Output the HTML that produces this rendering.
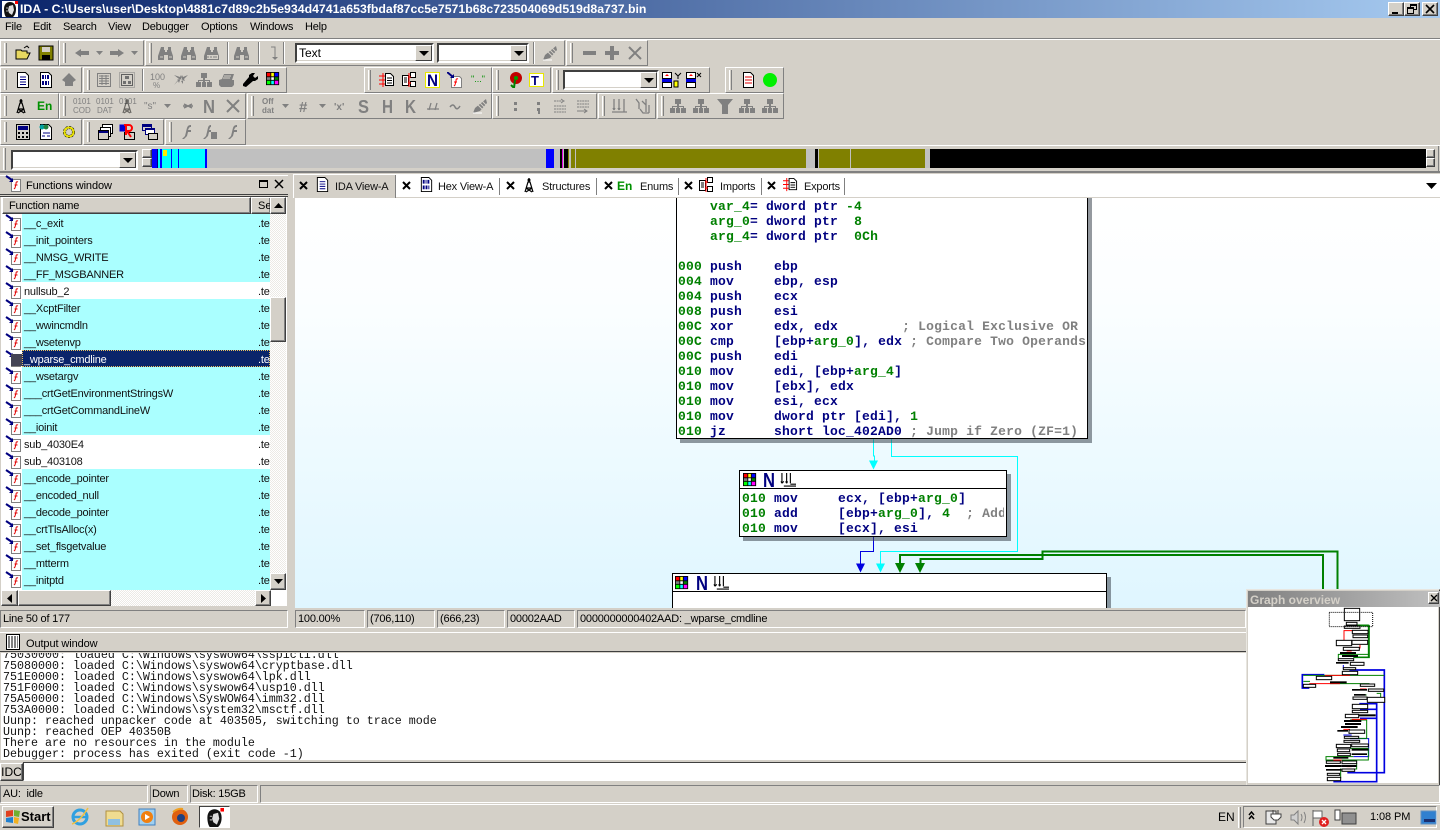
<!DOCTYPE html>
<html><head><meta charset="utf-8"><title>IDA</title>
<style>
html,body{margin:0;padding:0;background:#d4d0c8}
#r{position:relative;width:1440px;height:830px;overflow:hidden;background:#d4d0c8;font:12px "Liberation Sans",sans-serif;color:#000}
#r div,#r span.a,#r svg.a{position:absolute;box-sizing:border-box}
.t{white-space:pre;line-height:16px;font-size:11px;letter-spacing:-.2px}
.g{height:26px;border:1px solid;border-color:#fff #808080 #808080 #fff;background:#d4d0c8}
.g:before{content:"";position:absolute;left:3px;top:2px;bottom:2px;width:3px;border-left:1px solid #fff;border-right:1px solid #808080;background:#d4d0c8;box-sizing:border-box}
.sep{width:2px;height:22px;border-left:1px solid #808080;border-right:1px solid #fff}
.combo{height:20px;background:#fff;border:2px solid;border-color:#404040 #fff #fff #404040;box-shadow:inset -1px -1px 0 #d4d0c8}
.cb{width:17px;height:16px;top:0;right:0;background:#d4d0c8;border:1px solid;border-color:#fff #404040 #404040 #fff}
.cb:after{content:"";position:absolute;left:3px;top:5px;border:5px solid transparent;border-top:5px solid #000;border-bottom:0}
.btn{background:#d4d0c8;border:1px solid;border-color:#fff #404040 #404040 #fff;box-shadow:inset -1px -1px 0 #808080}
.ck{background-color:#eceae5;background-image:linear-gradient(45deg,#fff 25%,transparent 25%,transparent 75%,#fff 75%),linear-gradient(45deg,#fff 25%,transparent 25%,transparent 75%,#fff 75%);background-size:2px 2px;background-position:0 0,1px 1px}
.row{left:22px;width:248px;height:17px;background:#aaffff;padding-left:2px;line-height:21px;font-size:11px;letter-spacing:-.2px;white-space:pre;color:#111}
.row.w{background:#fff}
.row.s{background:#0a246a;color:#fff;outline:1px dotted #e8c060;outline-offset:-1px}
.te{position:absolute;left:236px;top:0}
.sc{height:18px;top:610px;border:1px solid;border-color:#808080 #fff #fff #808080;line-height:16px;padding-left:2px;white-space:pre;font-size:11px;letter-spacing:-.2px}
.st{height:18px;top:785px;border:1px solid;border-color:#808080 #fff #fff #808080;line-height:16px;padding-left:2px;white-space:pre;font-size:11px;letter-spacing:-.2px}
.tab{top:179px;line-height:16px;font-size:11px;letter-spacing:-.2px;white-space:pre;color:#111}
.tsep{top:178px;width:1px;height:17px;background:#808080}
.blk{background:#fff;border:1px solid #000;box-shadow:4px 4px 0 rgba(60,70,80,.55)}
.code{font:bold 13px/15px "Liberation Mono",monospace;letter-spacing:.2px;white-space:pre;color:#000080}
.code i{font-style:normal;color:#008000}
.code b{font-weight:bold;color:#808080}
.out{font:11.67px/11px "Liberation Mono",monospace;white-space:pre;color:#111}
text{font-family:"Liberation Sans",sans-serif}
</style></head><body><div id="r">

<svg width="0" height="0" style="position:absolute"><defs>
<symbol id="open" viewBox="0 0 16 16"><path d="M1 5h5l1 1h5v2h3l-3 6H1z" fill="#e8d860" stroke="#000"/><path d="M9 3l3-2 2 2" fill="none" stroke="#000"/></symbol>
<symbol id="save" viewBox="0 0 16 16"><rect x="1" y="1" width="14" height="14" fill="#808000" stroke="#000"/><rect x="4" y="2" width="8" height="5" fill="#d4d0c8"/><rect x="4" y="10" width="8" height="5" fill="#000"/></symbol>
<symbol id="la" viewBox="0 0 16 16"><path d="M1 8l6-4v2h8v4H7v2z" fill="#808080"/></symbol>
<symbol id="ra" viewBox="0 0 16 16"><path d="M15 8L9 4v2H1v4h8v2z" fill="#808080"/></symbol>
<symbol id="dd" viewBox="0 0 16 16"><path d="M4 6h7l-3.500 4z" fill="#808080"/></symbol>
<symbol id="bino" viewBox="0 0 16 16"><path d="M3 2h3v3h1v2h2V5h1V2h3v3l2 6v4H10v-5H6v5H0v-4l2-6z" fill="#808080"/><path d="M2 12h3M11 12h3" stroke="#d4d0c8"/></symbol>
<symbol id="bino2" viewBox="0 0 16 16"><path d="M3 2h3v3h1v2h2V5h1V2h3v3l2 6v4H0v-4l2-6z" fill="#808080"/><rect x="3" y="10" width="11" height="4" fill="#d4d0c8"/><path d="M4 11v2M7 11v2M10 11v2M12 11v2" stroke="#808080"/></symbol>
<symbol id="dn" viewBox="0 0 16 16"><path d="M5 2h4v10" fill="none" stroke="#808080"/><path d="M6 12h6l-3 3z" fill="#808080"/></symbol>
<symbol id="pen" viewBox="0 0 16 16"><path d="M14 1l1 4-7 8-7 2 2-5z" fill="#808080"/><path d="M6 7l5 5M8 5l5 5M10 3l4 4" stroke="#d4d0c8"/><path d="M1 15h9" stroke="#fff"/></symbol>
<symbol id="minus" viewBox="0 0 16 16"><rect x="1" y="6" width="13" height="4" fill="#808080"/></symbol>
<symbol id="plus" viewBox="0 0 16 16"><path d="M6 1h4v5h5v4h-5v5H6v-5H1V6h5z" fill="#808080"/></symbol>
<symbol id="xx" viewBox="0 0 16 16"><path d="M2 2l12 12M14 2L2 14" stroke="#808080" stroke-width="2"/></symbol>
<symbol id="doc" viewBox="0 0 16 16"><path d="M2.500.5h8l3 3v12h-11z" fill="#fff" stroke="#000"/><path d="M5 5h6M5 7.500h6M5 10h6M5 12.500h6" stroke="#000080"/></symbol>
<symbol id="hex" viewBox="0 0 16 16"><path d="M2.500.5h8l3 3v12h-11z" fill="#fff" stroke="#000"/><path d="M4 3h2v4H4zM7 3h1v4H7zM9 3h2v4H9zM4 9h2v4H4zM7 9h2v4H7zM10 9h1v4h-1z" fill="#000080"/></symbol>
<symbol id="house" viewBox="0 0 16 16"><path d="M8 1l7 7-3 2v4H4v-4L1 8z" fill="#808080"/></symbol>
<symbol id="form" viewBox="0 0 16 16"><rect x="1.500" y="1.500" width="13" height="13" fill="#d4d0c8" stroke="#808080"/><path d="M3 4h10M3 6.500h10M3 9h10M3 11.500h10M6 3v10M10 3v10" stroke="#808080"/></symbol>
<symbol id="prox" viewBox="0 0 16 16"><rect x=".5" y=".5" width="15" height="15" fill="none" stroke="#808080" stroke-dasharray="1 1"/><rect x="2.500" y="2.500" width="11" height="11" fill="#d4d0c8" stroke="#606060"/><path d="M6 4h4v3H6zM4 9h3v3H4zM9 9h3v3H9z" fill="#707070"/></symbol>
<symbol id="shr" viewBox="0 0 16 16"><path d="M1 3l5 4-1 1 4-1-1-4-1 2zM15 3l-4 4 1 2-4-2 1-4 1 2zM1 13l4-4 1 2 1-3-3-1 1 1zM15 13l-5-4v3l-2-3 3-1-1 1z" fill="#808080"/></symbol>
<symbol id="tree" viewBox="0 0 16 16"><path d="M5 1h6v5H9v2h5v2h2v5h-5v-5h2V9H9v1h1v5H6v-5h1V9H3v1h2v5H0v-5h2V8h5V6H5z" fill="#808080"/></symbol>
<symbol id="prn" viewBox="0 0 16 16"><path d="M5 2h10l-2 6h2v5l-2 2H2l-2-2V8l3-1z" fill="#808080"/><path d="M5 4h7M4 6h7" stroke="#d4d0c8"/></symbol>
<symbol id="wr" viewBox="0 0 16 16"><path d="M10 1l3 0-2 3 2 2 3-2 0 3-3 2h-2l-7 6-3-1 0-2 6-7V3z" fill="#000"/></symbol>
<symbol id="grid" viewBox="0 0 16 16"><rect width="15" height="15" fill="#000"/><rect x="1" y="1" width="4" height="4" fill="#f00"/><rect x="6" y="1" width="3" height="4" fill="#ff0"/><rect x="10" y="1" width="4" height="4" fill="#00f"/><rect x="1" y="6" width="4" height="3" fill="#808080"/><rect x="6" y="6" width="3" height="3" fill="#fff"/><rect x="10" y="6" width="4" height="3" fill="#008000"/><rect x="1" y="10" width="4" height="4" fill="#0f0"/><rect x="6" y="10" width="3" height="4" fill="#0ff"/><rect x="10" y="10" width="4" height="4" fill="#f0f"/></symbol>
<symbol id="exp" viewBox="0 0 16 16"><path d="M6.500 1.500h5l3 3v9h-8z" fill="#fff" stroke="#000"/><path d="M8 6h5M8 8.500h5M8 11h5" stroke="#000"/><path d="M4 1v14M0 4h6M0 8h6M0 12h6" stroke="#f00"/></symbol>
<symbol id="imp" viewBox="0 0 16 16"><path d="M1.500 3.500h6v10h-6z" fill="#fff" stroke="#000"/><path d="M9.500.5h5v5h-5zM9.500 9.500h5v5h-5z" fill="#fff" stroke="#000"/><path d="M7 5h3M7 11h3M8 1v14" stroke="#f00"/><path d="M3 6h3M3 8h3M3 10h3" stroke="#000"/></symbol>
<symbol id="fx" viewBox="0 0 16 16"><path d="M4.500 4.500h8l2 2v9h-10z" fill="#fff" stroke="#808080"/><path d="M11 7c-2-1-2 1-2 2l-1 4-1 1M7 10h3" fill="none" stroke="#f00"/><path d="M0 0l6 5" stroke="#000080" stroke-width="2"/><path d="M7 6V2L3 6z" fill="#000080"/></symbol>
<symbol id="fn" viewBox="0 0 18 17"><path d="M8.500 4.500h7v12h-9v-10z" fill="#fff" stroke="#808080"/><path d="M13 7c-2-1-2 1-2 2l-1 4-1 1M9.500 10h3" fill="none" stroke="#e00000"/><path d="M1 1l6 4" stroke="#000080" stroke-width="2"/><path d="M8 7V3L4 7z" fill="#000080"/></symbol>
<symbol id="strc" viewBox="0 0 16 16"><path d="M8 1v4M4 15L7 5h2l3 10M5 11l6 0M5 11l6 4M11 11l-6 4" fill="none" stroke="#000" stroke-width="1.200"/><circle cx="8" cy="3" r="1.500" fill="#000"/></symbol>
<symbol id="rose" viewBox="0 0 16 16"><circle cx="10" cy="6" r="6" fill="#c00000"/><circle cx="10" cy="6" r="2" fill="#00a000"/><path d="M5 13l3 3 1-8" fill="none" stroke="#008000" stroke-width="2"/></symbol>
<symbol id="db1" viewBox="0 0 18 16"><rect x=".5" y=".5" width="9" height="6" fill="#fff" stroke="#000"/><path d="M3 4l2-2 2 2z" fill="#f00"/><rect x="0" y="7" width="10" height="3" fill="#0000e0"/><rect x=".5" y="10.500" width="9" height="5" fill="#fff" stroke="#000"/></symbol>
<symbol id="calc" viewBox="0 0 16 16"><rect x="1.500" y=".5" width="13" height="15" fill="#d4d0c8" stroke="#000"/><rect x="3" y="2" width="10" height="4" fill="#000080"/><path d="M3 8h2v2H3zM7 8h2v2H7zM11 8h2v2h-2zM3 12h2v2H3zM7 12h2v2H7zM11 12h2v2h-2z" fill="#000"/></symbol>
<symbol id="note" viewBox="0 0 16 16"><path d="M2.500.5h8l3 3v12h-11z" fill="#fff" stroke="#000"/><circle cx="4" cy="3" r="2.500" fill="#00a0a0"/><circle cx="8" cy="3" r="2.500" fill="#208040"/><path d="M5 9h7M4 12h3M9 12h3" stroke="#000080"/></symbol>
<symbol id="gear" viewBox="0 0 16 16"><circle cx="8" cy="8" r="4.500" fill="none" stroke="#000" stroke-width="3" stroke-dasharray="2 1"/><circle cx="8" cy="8" r="4.500" fill="none" stroke="#e8e000" stroke-width="2"/></symbol>
<symbol id="win" viewBox="0 0 16 16"><path d="M5.500.5h10v9h-10z" fill="#fff" stroke="#000"/><path d="M3.500 3.500h10v9h-10z" fill="#fff" stroke="#000"/><path d="M1.500 6.500h10v9h-10z" fill="#d4d0c8" stroke="#000"/><path d="M2 7h9v2H2z" fill="#000080"/></symbol>
<symbol id="winr" viewBox="0 0 16 16"><path d="M.5.5h7v7h-7z" fill="#0000d0"/><path d="M5.500 8.500h10v7h-10z" fill="#d4d0c8" stroke="#000"/><path d="M5 1h5a2 2 0 010 6H8l4 6M7 1v10" fill="none" stroke="#f00" stroke-width="2"/></symbol>
<symbol id="winb" viewBox="0 0 16 16"><path d="M.5.5h9v6h-9z" fill="#d4d0c8" stroke="#000080"/><path d="M3.500 4.500h9v6h-9z" fill="#fff" stroke="#000080"/><path d="M6.500 9.500h9v6h-9z" fill="#d4d0c8" stroke="#000"/><path d="M1 1h8v2H1zM4 5h8v1H4z" fill="#000080"/></symbol>
<symbol id="fg" viewBox="0 0 16 16"><path d="M12 1C8 1 8 4 7 8l-1 4-3 3h2l3-3 1-4h3V6H9c1-2 1-3 3-3z" fill="#808080"/></symbol>
<symbol id="fg2" viewBox="0 0 16 16"><path d="M9 1C6 1 6 4 5 8l-1 4-3 3h2l3-3 1-4h2V6H7c1-2 1-3 2-3z" fill="#808080"/><rect x="9" y="8" width="6" height="7" fill="#808080"/></symbol>
<symbol id="lay" viewBox="0 0 16 16"><path d="M2 1v11M2 12l-1-2M2 12l1-2M7 1v11M7 12l-1-2M7 12l1-2M12 1v13M0 14h15" stroke="#808080" fill="none" stroke-width="1.300"/></symbol>
<symbol id="lay2" viewBox="0 0 16 16"><path d="M1 1l3 4 0 6M7 3l4 4v7M11 1v7M14 7v8M5 11l3 4h6" stroke="#808080" fill="none" stroke-width="1.300"/></symbol>
<symbol id="ltree" viewBox="0 0 16 16"><path d="M1 1v11M1 12l-1-2M1 12l2-2M6 1v11M6 12l-1-2M6 12l1-2M10 1v11M3 15h13M10 13h6" stroke="#000" fill="none" stroke-width="1.200"/></symbol>
<symbol id="girl" viewBox="0 0 16 16"><rect width="16" height="16" fill="#fff"/><path d="M2 8C2 3 5 1 8 1s6 2 6 7-2 7-3 8H4C3 15 2 12 2 8z" fill="#111"/><path d="M7 5l4-1 1 5-2 5-3-2-1-3z" fill="#ddd"/><path d="M4 7h2M4 10h2" stroke="#aaa"/><rect x="13" y="0" width="3" height="3" fill="#f00"/></symbol>
<symbol id="arrowc" viewBox="0 0 10 10"><path d="M0 0h10L5 10z"/></symbol>
</defs></svg>

<!-- title bar -->
<div style="left:0;top:0;width:1440px;height:18px;background:linear-gradient(90deg,#0a246a,#a6caf0)"></div>
<svg class="a" style="left:2px;top:1px" width="16" height="16"><use href="#girl"/></svg>
<div style="left:20px;top:1px;color:#fff;font:bold 12.3px/16px 'Liberation Sans',sans-serif;white-space:pre">IDA - C:\Users\user\Desktop\4881c7d89c2b5e934d4741a653fbdaf87cc5e7571b68c723504069d519d8a737.bin</div>
<div class="btn" style="left:1388px;top:2px;width:16px;height:14px"><div style="left:3px;top:9px;width:6px;height:2px;background:#000"></div></div>
<div class="btn" style="left:1404px;top:2px;width:16px;height:14px"><div style="left:5px;top:1px;width:7px;height:6px;border:1px solid #000;border-top-width:2px"></div><div style="left:2px;top:4px;width:7px;height:7px;border:1px solid #000;border-top-width:2px;background:#d4d0c8"></div></div>
<div class="btn" style="left:1422px;top:2px;width:16px;height:14px"><svg class="a" style="left:2px;top:1px" width="10" height="10"><path d="M1 1l8 8M9 1L1 9" stroke="#000" stroke-width="1.600"/></svg></div>

<!-- menu -->
<div class="t" style="left:5px;top:19px">File</div>
<div class="t" style="left:33px;top:19px">Edit</div>
<div class="t" style="left:63px;top:19px">Search</div>
<div class="t" style="left:108px;top:19px">View</div>
<div class="t" style="left:142px;top:19px">Debugger</div>
<div class="t" style="left:201px;top:19px">Options</div>
<div class="t" style="left:250px;top:19px">Windows</div>
<div class="t" style="left:305px;top:19px">Help</div>
<div style="left:0;top:38px;width:1440px;height:1px;background:#808080"></div>
<div style="left:0;top:39px;width:1440px;height:1px;background:#fff"></div>

<!-- toolbars -->
<div class="g" style="left:0;top:40px;width:59px"></div>
<div class="g" style="left:59px;top:40px;width:85px"></div>
<div class="g" style="left:145px;top:40px;width:420px"></div>
<div class="g" style="left:566px;top:40px;width:82px"></div>
<div class="sep" style="left:227px;top:42px"></div><div class="sep" style="left:258px;top:42px"></div><div class="sep" style="left:283px;top:42px"></div><div class="sep" style="left:533px;top:42px"></div>
<div class="combo" style="left:295px;top:43px;width:139px"><span class="a" style="left:2px;top:0;line-height:16px">Text</span><div class="cb"></div></div>
<div class="combo" style="left:437px;top:43px;width:92px"><div class="cb"></div></div>

<div class="g" style="left:0;top:67px;width:82px"></div>
<div class="g" style="left:83px;top:67px;width:204px"></div>
<div class="sep" style="left:142px;top:69px"></div>
<div class="g" style="left:364px;top:67px;width:128px"></div>
<div class="g" style="left:492px;top:67px;width:59px"></div>
<div class="g" style="left:552px;top:67px;width:158px"></div>
<div class="g" style="left:725px;top:67px;width:59px"></div>
<div class="combo" style="left:563px;top:70px;width:96px"><div class="cb"></div></div>

<div class="g" style="left:0;top:93px;width:59px"></div>
<div class="g" style="left:59px;top:93px;width:187px"></div>
<div class="g" style="left:247px;top:93px;width:245px"></div>
<div class="g" style="left:492px;top:93px;width:105px"></div>
<div class="g" style="left:598px;top:93px;width:58px"></div>
<div class="g" style="left:657px;top:93px;width:127px"></div>

<div class="g" style="left:0;top:119px;width:82px"></div>
<div class="g" style="left:83px;top:119px;width:81px"></div>
<div class="g" style="left:165px;top:119px;width:81px"></div>

<svg class="a" style="left:0;top:0" width="1440" height="175">
<use href="#open" x="15" y="45" width="16" height="16"/><use href="#save" x="38" y="45" width="16" height="16"/>
<use href="#la" x="74" y="45" width="16" height="16"/><use href="#dd" x="92" y="45" width="16" height="16"/><use href="#ra" x="109" y="45" width="16" height="16"/><use href="#dd" x="127" y="45" width="16" height="16"/>
<use href="#bino" x="158" y="45" width="16" height="16"/><use href="#bino" x="181" y="45" width="16" height="16"/><use href="#bino2" x="204" y="45" width="16" height="16"/><use href="#bino" x="234" y="45" width="16" height="16"/><use href="#dn" x="266" y="45" width="16" height="16"/>
<use href="#pen" x="542" y="45" width="16" height="16"/><use href="#minus" x="582" y="45" width="16" height="16"/><use href="#plus" x="604" y="45" width="16" height="16"/><use href="#xx" x="627" y="45" width="16" height="16"/>

<use href="#doc" x="15" y="72" width="16" height="16"/><use href="#hex" x="38" y="72" width="16" height="16"/><use href="#house" x="61" y="72" width="16" height="16"/>
<use href="#form" x="96" y="72" width="16" height="16"/><use href="#prox" x="119" y="72" width="16" height="16"/>
<text x="150" y="80" font-size="9" fill="#808080">100</text><text x="153" y="88" font-size="8" fill="#808080">%</text>
<use href="#shr" x="173" y="72" width="16" height="16"/><use href="#tree" x="196" y="72" width="16" height="16"/><use href="#prn" x="219" y="72" width="16" height="16"/><use href="#wr" x="242" y="72" width="16" height="16"/><use href="#grid" x="266" y="72" width="14" height="14"/>
<use href="#exp" x="379" y="72" width="16" height="16"/><use href="#imp" x="401" y="72" width="16" height="16"/>
<rect x="425.500" y="72.500" width="14" height="15" fill="#fff" stroke="#e8e800"/><text x="427" y="86" font-size="17" font-weight="bold" fill="#000080" textLength="11" lengthAdjust="spacingAndGlyphs">N</text>
<use href="#fx" x="447" y="72" width="16" height="16"/>
<text x="471" y="82" font-size="9" fill="#009000">"..."</text>
<use href="#rose" x="506" y="72" width="16" height="16"/>
<rect x="529.500" y="73.500" width="14" height="13" fill="#fff" stroke="#e8e800"/><text x="531" y="85" font-size="13" font-weight="bold" font-family="Liberation Serif" fill="#000080">T</text>
<use href="#db1" x="662" y="72" width="18" height="16"/><path d="M675 73l3 3 3-3M678 76v3" stroke="#000" fill="none"/><rect x="674" y="81" width="4" height="6" fill="#ff0" stroke="#000"/>
<use href="#db1" x="686" y="72" width="18" height="16"/><path d="M697 73l4 4M701 73l-4 4" stroke="#000"/>
<path d="M743.500 72.500h7l3 3v12h-10z" fill="#fff" stroke="#000"/><path d="M745 77h7M745 80h7M745 83h7" stroke="#e00000"/>
<circle cx="770" cy="80" r="7" fill="#00f000"/>

<use href="#strc" x="13" y="98" width="16" height="16"/><text x="37" y="110" font-size="12" font-weight="bold" font-family="Liberation Serif" fill="#009000">En</text>
<g fill="#808080" font-size="8"><text x="73" y="104">0101</text><text x="73" y="113">COD</text><text x="96" y="104">0101</text><text x="97" y="113">DAT</text><text x="119" y="104">0101</text></g>
<use href="#strc" x="119" y="98" width="16" height="16" opacity=".5"/>
<text x="144" y="109" font-size="10" fill="#808080">"s"</text><use href="#dd" x="160" y="98" width="16" height="16"/><path d="M184 104l8 4M192 104l-8 4M183 106h10" stroke="#808080" stroke-width="1.500"/>
<text x="203" y="113" font-size="18" font-weight="bold" fill="#808080" textLength="12" lengthAdjust="spacingAndGlyphs">N</text><use href="#xx" x="225" y="98" width="16" height="16"/>
<g fill="#808080" font-weight="bold" font-size="8"><text x="262" y="104">Off</text><text x="262" y="113">dat</text></g><use href="#dd" x="278" y="98" width="16" height="16"/>
<text x="299" y="112" font-size="15" font-weight="bold" fill="#808080">#</text><use href="#dd" x="315" y="98" width="16" height="16"/>
<text x="334" y="110" font-size="10" font-weight="bold" fill="#808080">'x'</text>
<g font-size="18" font-weight="bold" fill="#808080"><text x="358" y="113" textLength="11" lengthAdjust="spacingAndGlyphs">S</text><text x="382" y="113" textLength="11" lengthAdjust="spacingAndGlyphs">H</text><text x="405" y="113" textLength="11" lengthAdjust="spacingAndGlyphs">K</text></g>
<path d="M427 109h12M431 103l-2 7M437 103l-2 7" stroke="#808080" stroke-width="1.300"/><path d="M450 107q3-4 5 0t5-1" fill="none" stroke="#808080" stroke-width="1.500"/>
<use href="#pen" x="472" y="98" width="16" height="16"/>
<g fill="#808080"><rect x="514" y="102" width="3" height="3"/><rect x="514" y="108" width="3" height="3"/><rect x="537" y="102" width="3" height="3"/><rect x="537" y="108" width="3" height="3"/><rect x="538" y="111" width="2" height="3"/></g>
<g fill="none" stroke="#808080"><path d="M554 101h10M561 99l3 2-3 2M554 106h12M554 109h12M554 112h12" stroke-dasharray="2 .6"/><path d="M577 101h12M577 104h12M577 107h12" stroke-dasharray="2 .6"/><path d="M577 111h10M584 109l3 2-3 2"/></g>
<use href="#lay" x="612" y="98" width="16" height="16"/><use href="#lay2" x="635" y="98" width="16" height="16"/>
<use href="#tree" x="670" y="98" width="16" height="16"/><use href="#tree" x="693" y="98" width="16" height="16"/><path d="M717 99h16l-5 6v9h-6v-9z" fill="#808080"/><use href="#tree" x="739" y="98" width="16" height="16"/><use href="#tree" x="762" y="98" width="16" height="16"/>

<use href="#calc" x="15" y="124" width="16" height="16"/><use href="#note" x="38" y="124" width="16" height="16"/><use href="#gear" x="61" y="124" width="16" height="16"/>
<use href="#win" x="97" y="124" width="16" height="16"/><use href="#winr" x="119" y="124" width="16" height="16"/><use href="#winb" x="142" y="124" width="16" height="16"/>
<use href="#fg" x="179" y="124" width="16" height="16"/><use href="#fg2" x="202" y="124" width="16" height="16"/><use href="#fg" x="225" y="124" width="16" height="16"/>
</svg>

<!-- nav band row -->
<div style="left:0;top:145px;width:1440px;height:1px;background:#fff"></div>
<div style="left:1438px;top:146px;width:1px;height:26px;background:#808080"></div>
<div style="left:0;top:171px;width:1440px;height:2px;background:#808080"></div>
<div style="left:3px;top:148px;width:3px;height:22px;border-left:1px solid #fff;border-right:1px solid #808080"></div>
<div class="combo" style="left:11px;top:150px;width:127px"><div class="cb"></div></div>
<div class="btn" style="left:142px;top:149px;width:10px;height:9px"></div>
<div class="btn" style="left:142px;top:158px;width:10px;height:9px"></div>
<div style="left:152px;top:149px;width:1274px;height:19px;background:#c0c0c0"></div>
<div style="left:152px;top:149px;width:5px;height:19px;background:#0000ff"></div>
<div style="left:157px;top:149px;width:1px;height:19px;background:#000080"></div>
<div style="left:158px;top:149px;width:2px;height:19px;background:#0ff"></div>
<div style="left:160px;top:149px;width:2px;height:19px;background:#0000ff"></div>
<div style="left:162px;top:149px;width:43px;height:19px;background:#0ff"></div>
<div style="left:171px;top:149px;width:1px;height:19px;background:#0000ff"></div>
<div style="left:178px;top:149px;width:1px;height:19px;background:#0000ff"></div>
<div style="left:205px;top:149px;width:2px;height:19px;background:#0000ff"></div>
<div style="left:163px;top:150px;width:4px;height:6px;background:#ffee00"></div>
<div style="left:546px;top:149px;width:8px;height:19px;background:#0000ff"></div>
<div style="left:560px;top:149px;width:3px;height:19px;background:#000"></div>
<div style="left:562px;top:149px;width:1px;height:19px;background:#e000e0"></div>
<div style="left:564px;top:149px;width:4px;height:19px;background:#000"></div>
<div style="left:568px;top:149px;width:1px;height:19px;background:#808000"></div>
<div style="left:571px;top:149px;width:4px;height:19px;background:#808000"></div>
<div style="left:576px;top:149px;width:230px;height:19px;background:#808000"></div>
<div style="left:815px;top:149px;width:3px;height:19px;background:#000"></div>
<div style="left:819px;top:149px;width:31px;height:19px;background:#808000"></div>
<div style="left:851px;top:149px;width:74px;height:19px;background:#808000"></div>
<div style="left:930px;top:149px;width:496px;height:19px;background:#000"></div>
<div class="btn" style="left:1426px;top:149px;width:9px;height:9px"></div>
<div class="btn" style="left:1426px;top:158px;width:9px;height:9px"></div>

<!-- functions window -->
<div style="left:0;top:175px;width:288px;height:20px;border-bottom:1px solid #404040;border-top:1px solid #fff"></div>
<svg class="a" style="left:5px;top:175px" width="18" height="17"><use href="#fn" width="18" height="17"/></svg>
<div style="left:26px;top:178px;font-size:11px;letter-spacing:-.1px;line-height:16px;white-space:pre">Functions window</div>
<div style="left:259px;top:180px;width:9px;height:8px;border:1px solid #000;border-top-width:2px"></div>
<svg class="a" style="left:274px;top:179px" width="10" height="10"><path d="M1 1l8 8M9 1L1 9" stroke="#000" stroke-width="1.500"/></svg>
<div style="left:0;top:196px;width:288px;height:1px;background:#404040"></div>
<div style="left:1px;top:197px;width:286px;height:413px;background:#fff"></div>
<div class="btn" style="left:2px;top:197px;width:249px;height:17px;font-size:11px;letter-spacing:-.2px;line-height:17px;padding-left:6px">Function name</div>
<div class="btn" style="left:251px;top:197px;width:20px;height:17px;font-size:11px;line-height:17px;padding-left:6px;overflow:hidden">Se</div>
<div class="row" style="top:214px">__c_exit<span class="te">.te</span></div>
<div class="row" style="top:231px">__init_pointers<span class="te">.te</span></div>
<div class="row" style="top:248px">__NMSG_WRITE<span class="te">.te</span></div>
<div class="row" style="top:265px">__FF_MSGBANNER<span class="te">.te</span></div>
<div class="row w" style="top:282px">nullsub_2<span class="te">.te</span></div>
<div class="row" style="top:299px">__XcptFilter<span class="te">.te</span></div>
<div class="row" style="top:316px">__wwincmdln<span class="te">.te</span></div>
<div class="row" style="top:333px">__wsetenvp<span class="te">.te</span></div>
<div class="row s" style="top:350px">_wparse_cmdline<span class="te">.te</span></div>
<div class="row" style="top:367px">__wsetargv<span class="te">.te</span></div>
<div class="row" style="top:384px">___crtGetEnvironmentStringsW<span class="te">.te</span></div>
<div class="row" style="top:401px">___crtGetCommandLineW<span class="te">.te</span></div>
<div class="row" style="top:418px">__ioinit<span class="te">.te</span></div>
<div class="row w" style="top:435px">sub_4030E4<span class="te">.te</span></div>
<div class="row w" style="top:452px">sub_403108<span class="te">.te</span></div>
<div class="row" style="top:469px">__encode_pointer<span class="te">.te</span></div>
<div class="row" style="top:486px">__encoded_null<span class="te">.te</span></div>
<div class="row" style="top:503px">__decode_pointer<span class="te">.te</span></div>
<div class="row" style="top:520px">__crtTlsAlloc(x)<span class="te">.te</span></div>
<div class="row" style="top:537px">__set_flsgetvalue<span class="te">.te</span></div>
<div class="row" style="top:554px">__mtterm<span class="te">.te</span></div>
<div class="row" style="top:571px;height:19px">__initptd<span class="te">.te</span></div>
<svg class="a" style="left:5px;top:214px" width="18" height="376">
<use href="#fn" y="0" width="18" height="17"/><use href="#fn" y="17" width="18" height="17"/><use href="#fn" y="34" width="18" height="17"/><use href="#fn" y="51" width="18" height="17"/><use href="#fn" y="68" width="18" height="17"/><use href="#fn" y="85" width="18" height="17"/><use href="#fn" y="102" width="18" height="17"/><use href="#fn" y="119" width="18" height="17"/><use href="#fn" y="136" width="18" height="17"/><rect x="6" y="140" width="11" height="12" fill="#445"/><use href="#fn" y="153" width="18" height="17"/><use href="#fn" y="170" width="18" height="17"/><use href="#fn" y="187" width="18" height="17"/><use href="#fn" y="204" width="18" height="17"/><use href="#fn" y="221" width="18" height="17"/><use href="#fn" y="238" width="18" height="17"/><use href="#fn" y="255" width="18" height="17"/><use href="#fn" y="272" width="18" height="17"/><use href="#fn" y="289" width="18" height="17"/><use href="#fn" y="306" width="18" height="17"/><use href="#fn" y="323" width="18" height="17"/><use href="#fn" y="340" width="18" height="17"/><use href="#fn" y="357" width="18" height="17"/>
</svg>
<div class="ck" style="left:270px;top:214px;width:16px;height:376px"></div>
<div class="btn" style="left:270px;top:197px;width:16px;height:17px"><svg class="a" style="left:3px;top:5px" width="9" height="5"><path d="M0 5h9L4.500 0z"/></svg></div>
<div class="btn" style="left:270px;top:297px;width:16px;height:45px"></div>
<div class="btn" style="left:270px;top:573px;width:16px;height:17px"><svg class="a" style="left:3px;top:5px" width="9" height="5"><path d="M0 0h9L4.500 5z"/></svg></div>
<div class="ck" style="left:1px;top:590px;width:270px;height:16px"></div>
<div class="btn" style="left:1px;top:590px;width:17px;height:16px"><svg class="a" style="left:5px;top:3px" width="5" height="9"><path d="M5 0v9L0 4.500z"/></svg></div>
<div class="btn" style="left:18px;top:590px;width:93px;height:16px"></div>
<div class="btn" style="left:255px;top:590px;width:16px;height:16px"><svg class="a" style="left:5px;top:3px" width="5" height="9"><path d="M0 0v9L5 4.500z"/></svg></div>
<div style="left:0;top:606px;width:288px;height:4px;background:#d4d0c8"></div>
<div class="sc" style="left:0;width:288px">Line 50 of 177</div>

<!-- tabs -->
<div style="left:293px;top:174px;width:1147px;height:23px;background:#fff"></div>
<div style="left:293px;top:175px;width:103px;height:23px;background:#d4d0c8;border-right:1px solid #808080;border-left:1px solid #fff"></div>
<svg class="a" style="left:0;top:175px" width="1440" height="23">
<g stroke="#000" stroke-width="2"><path d="M300 7l7 7M307 7l-7 7M403 7l7 7M410 7l-7 7M507 7l7 7M514 7l-7 7M605 7l7 7M612 7l-7 7M685 7l7 7M692 7l-7 7M768 7l7 7M775 7l-7 7"/></g>
<use href="#doc" x="315" y="2" width="15" height="15"/><use href="#hex" x="419" y="2" width="15" height="15"/><use href="#strc" x="521" y="2" width="16" height="16"/>
<text x="617" y="15" font-size="12" font-weight="bold" font-family="Liberation Serif" fill="#009000">En</text>
<use href="#imp" x="698" y="2" width="16" height="16"/><use href="#exp" x="783" y="2" width="15" height="15"/>
<path d="M1426 8h11l-5.500 6z"/>
</svg>
<div class="tab" style="left:335px">IDA View-A</div>
<div class="tab" style="left:438px">Hex View-A</div><div class="tsep" style="left:499px"></div>
<div class="tab" style="left:542px">Structures</div><div class="tsep" style="left:596px"></div>
<div class="tab" style="left:640px">Enums</div><div class="tsep" style="left:678px"></div>
<div class="tab" style="left:720px">Imports</div><div class="tsep" style="left:761px"></div>
<div class="tab" style="left:804px">Exports</div><div class="tsep" style="left:844px"></div>

<!-- graph -->
<div style="left:295px;top:198px;width:1145px;height:410px;background:linear-gradient(180deg,#fff 0%,#fbfeff 25%,#dff6ff 100%);overflow:hidden">
<svg class="a" style="left:-295px;top:-198px" width="1440" height="830">
<path d="M891.500 438v18.500h126v95h-137v12" fill="none" stroke="#0ff"/>
<path d="M873.500 438v18h1v8" fill="none" stroke="#0ff"/>
<path d="M873.500 536v15.500h-13v12" fill="none" stroke="#0000e0"/>
<path d="M1337.500 610V551.500H1042.500V559H920.500V565" fill="none" stroke="#008000" stroke-width="2"/>
<path d="M1323 610V555H900V565" fill="none" stroke="#008000" stroke-width="2"/>
<use href="#arrowc" x="869" y="460" width="9" height="10" fill="#0ff"/>
<use href="#arrowc" x="856" y="563" width="9" height="10" fill="#0000e0"/>
<use href="#arrowc" x="876" y="563" width="9" height="10" fill="#0ff"/>
<use href="#arrowc" x="895" y="563" width="10" height="10" fill="#008000"/>
<use href="#arrowc" x="915" y="563" width="10" height="10" fill="#008000"/>
</svg>
<div class="blk" style="left:381px;top:-10px;width:412px;height:251px"></div>
<div class="code" style="left:383px;top:1px">    <i>var_4</i>= dword ptr <i>-4</i>
    <i>arg_0</i>= dword ptr  <i>8</i>
    <i>arg_4</i>= dword ptr  <i>0Ch</i>

<i>000</i> push    ebp
<i>004</i> mov     ebp, esp
<i>004</i> push    ecx
<i>008</i> push    esi
<i>00C</i> xor     edx, edx        <b>; Logical Exclusive OR</b>
<i>00C</i> cmp     [ebp+<i>arg_0</i>], edx <b>; Compare Two Operands</b>
<i>00C</i> push    edi
<i>010</i> mov     edi, [ebp+<i>arg_4</i>]
<i>010</i> mov     [ebx], edx
<i>010</i> mov     esi, ecx
<i>010</i> mov     dword ptr [edi], <i>1</i>
<i>010</i> jz      short loc_402AD0 <b>; Jump if Zero (ZF=1)</b></div>

<div class="blk" style="left:444px;top:272px;width:268px;height:67px"></div>
<div style="left:445px;top:290px;width:266px;height:1px;background:#000"></div>
<div class="code" style="left:447px;top:293px;width:262px;overflow:hidden"><i>010</i> mov     ecx, [ebp+<i>arg_0</i>]
<i>010</i> add     [ebp+<i>arg_0</i>], <i>4</i>  <b>; Add</b>
<i>010</i> mov     [ecx], esi</div>

<div class="blk" style="left:377px;top:375px;width:435px;height:60px"></div>
<div style="left:378px;top:393px;width:433px;height:1px;background:#000"></div>
<svg class="a" style="left:-295px;top:-198px" width="1440" height="830">
<use href="#grid" x="743" y="473" width="14" height="14"/><text x="763" y="487" font-size="20" font-weight="bold" fill="#000080" textLength="12" lengthAdjust="spacingAndGlyphs">N</text><use href="#ltree" x="780" y="472" width="17" height="15"/>
<use href="#grid" x="675" y="576" width="14" height="14"/><text x="696" y="590" font-size="20" font-weight="bold" fill="#000080" textLength="12" lengthAdjust="spacingAndGlyphs">N</text><use href="#ltree" x="713" y="575" width="17" height="15"/>
</svg>
</div>

<!-- graph status -->
<div class="sc" style="left:295px;width:70px">100.00%</div>
<div class="sc" style="left:367px;width:68px">(706,110)</div>
<div class="sc" style="left:437px;width:68px">(666,23)</div>
<div class="sc" style="left:507px;width:68px">00002AAD</div>
<div class="sc" style="left:577px;width:669px">0000000000402AAD: _wparse_cmdline</div>

<!-- output -->
<div style="left:0;top:632px;width:1440px;height:20px;border-top:1px solid #fff;border-bottom:1px solid #404040"></div>
<svg class="a" style="left:6px;top:634px" width="15" height="16"><rect x=".5" y=".5" width="13" height="15" fill="#fff" stroke="#000"/><path d="M2 3h10M2 5h10M2 7h10M2 9h10M2 11h10M2 13h10" stroke="#000" stroke-dasharray="2 1"/></svg>
<div style="left:26px;top:636px;font-size:11px;letter-spacing:-.1px;line-height:16px;white-space:pre">Output window</div>
<div style="left:1px;top:653px;width:1245px;height:107px;background:#fff;overflow:hidden">
<div class="out" style="left:2px;top:-3px">75030000: loaded C:\Windows\syswow64\sspicli.dll
75080000: loaded C:\Windows\syswow64\cryptbase.dll
751E0000: loaded C:\Windows\syswow64\lpk.dll
751F0000: loaded C:\Windows\syswow64\usp10.dll
75A50000: loaded C:\Windows\SysWOW64\imm32.dll
753A0000: loaded C:\Windows\system32\msctf.dll
Uunp: reached unpacker code at 403505, switching to trace mode
Uunp: reached OEP 40350B
There are no resources in the module
Debugger: process has exited (exit code -1)</div>
</div>
<div class="btn" style="left:0;top:763px;width:23px;height:18px;line-height:16px;text-align:center;font-size:12px">IDC</div>
<div style="left:23px;top:762px;width:1225px;height:19px;background:#fff;border:1px solid;border-color:#404040 #fff #fff #404040"></div>

<!-- overview -->
<div style="left:1246px;top:589px;width:194px;height:197px;background:#d4d0c8;border:1px solid #808080;border-color:#e8e6e0 #404040 #404040 #e8e6e0"></div>
<div style="left:1248px;top:591px;width:192px;height:16px;background:linear-gradient(90deg,#808080,#c0c0c0);color:#d4d0c8;font:bold 12px/18px 'Liberation Sans',sans-serif;padding-left:2px;white-space:pre;overflow:hidden">Graph overview</div>
<div class="btn" style="left:1428px;top:592px;width:11px;height:12px"><svg class="a" style="left:1px;top:1px" width="8" height="8"><path d="M1 1l6 6M7 1L1 7" stroke="#000" stroke-width="1.300"/></svg></div>
<div style="left:1248px;top:607px;width:190px;height:176px;background:#fff"></div>
<svg class="a" style="left:1240px;top:585px" width="200" height="205" viewBox="0 0 600 615">
<g fill="none">
<g stroke="#0000e0" stroke-width="5"><path d="M328 255H433V563H322M280 590H410V356H358M360 400H408M360 373H408M253 269H187V309H208"/></g>
<g stroke="#0000e0" stroke-width="3"><path d="M330 461H386V515H340M310 240V250H330M310 450H335"/></g>
<g stroke="#008000" stroke-width="3"><path d="M350 120H385V215M295 220V208H385M190 271H433M190 289H210M270 296H387V302M385 316H431M330 405H380V460H330M330 490H385V525H258V515H340M360 330H380M410 325H422V337M305 552H350V535M302 580V550"/></g>
<path d="M350 122H387V217H340" stroke="#008000" stroke-width="5"/>
<g stroke="#f00" stroke-width="3"><path d="M312 165V137H337M255 271H330M208 296H300M320 198H335M360 180V190M280 525H305M360 312H380M335 403H380M310 433H330M280 555H300M320 545H335"/></g>
</g>
<g fill="#000"><rect x="300" y="201" width="48" height="6"/><rect x="306" y="210" width="48" height="6"/><rect x="288" y="231" width="38" height="5"/><rect x="270" y="289" width="50" height="6"/><rect x="336" y="312" width="45" height="5"/><rect x="342" y="327" width="35" height="5"/><rect x="355" y="388" width="52" height="6"/><rect x="312" y="405" width="52" height="6"/><rect x="315" y="414" width="48" height="6"/><rect x="303" y="423" width="50" height="6"/><rect x="292" y="435" width="32" height="5"/><rect x="335" y="491" width="50" height="6"/><rect x="335" y="505" width="46" height="5"/><rect x="280" y="516" width="45" height="5"/><rect x="255" y="540" width="50" height="6"/><rect x="305" y="540" width="45" height="6"/><rect x="258" y="552" width="46" height="5"/></g>
<g fill="#fff" stroke="#000" stroke-width="3"><rect x="313" y="70" width="46" height="37"/><rect x="319" y="112" width="32" height="8"/><rect x="313" y="123" width="47" height="7"/><rect x="337" y="136" width="47" height="10"/><rect x="339" y="150" width="44" height="8"/><rect x="289" y="166" width="46" height="16"/><rect x="336" y="166" width="47" height="12"/><rect x="310" y="187" width="48" height="9"/><rect x="295" y="221" width="46" height="6"/><rect x="331" y="232" width="41" height="9"/><rect x="310" y="248" width="37" height="6"/><rect x="307" y="259" width="46" height="10"/><rect x="229" y="274" width="46" height="10"/><rect x="190" y="298" width="37" height="9"/><rect x="361" y="297" width="43" height="7"/><rect x="385" y="312" width="46" height="7"/><rect x="339" y="336" width="42" height="7"/><rect x="382" y="337" width="52" height="15"/><rect x="337" y="358" width="46" height="13"/><rect x="337" y="376" width="46" height="7"/><rect x="316" y="388" width="40" height="10"/><rect x="327" y="435" width="47" height="10"/><rect x="313" y="454" width="43" height="6"/><rect x="312" y="466" width="47" height="6"/><rect x="335" y="477" width="50" height="8"/><rect x="289" y="478" width="43" height="10"/><rect x="292" y="492" width="37" height="8"/><rect x="293" y="505" width="38" height="7"/><rect x="259" y="528" width="42" height="7"/><rect x="306" y="528" width="44" height="8"/><rect x="262" y="565" width="37" height="6"/><rect x="262" y="577" width="40" height="10"/><rect x="306" y="552" width="38" height="7"/></g>
<rect x="268" y="82" width="130" height="43" fill="none" stroke="#000" stroke-width="3" stroke-dasharray="3 3"/>
</svg>

<!-- status -->
<div class="st" style="left:0;width:148px;padding-left:2px">AU:  idle</div>
<div class="st" style="left:150px;width:38px;padding-left:1px">Down</div>
<div class="st" style="left:190px;width:68px;padding-left:1px">Disk: 15GB</div>
<div class="st" style="left:260px;width:1180px"></div>

<!-- taskbar -->
<div style="left:0;top:804px;width:1440px;height:1px;background:#fff"></div>
<div class="btn" style="left:2px;top:806px;width:52px;height:22px"></div>
<svg class="a" style="left:4px;top:808px" width="18" height="18"><path d="M2 3l7-1v6l-7 1z" fill="#e04020"/><path d="M10 2l6 1-1 6-5-1z" fill="#70b030"/><path d="M2 10l7-1v6l-7-1z" fill="#2080d0"/><path d="M10 9l5 1-1 6-4-1z" fill="#f0b020"/></svg>
<div style="left:21px;top:808px;font:bold 13px/17px 'Liberation Sans',sans-serif">Start</div>
<svg class="a" style="left:70px;top:806px" width="130" height="22">
<circle cx="10" cy="11" r="7" fill="none" stroke="#30a0e0" stroke-width="3"/><path d="M3 11h14" stroke="#30a0e0" stroke-width="2.500"/><path d="M2 18q8-3 16-16" fill="none" stroke="#f0c040" stroke-width="1.500"/>
<path d="M36 5h14l3 3v12H36z" fill="#f0dc90" stroke="#b09040"/><rect x="38" y="13" width="12" height="6" fill="#90c0e0"/>
<rect x="69" y="3" width="16" height="16" fill="#a0d0f0" stroke="#4080c0"/><circle cx="77" cy="11" r="6" fill="#f08010"/><path d="M75 8l5 3-5 3z" fill="#fff"/>
<circle cx="110" cy="11" r="8" fill="#e06010"/><circle cx="111" cy="12" r="4" fill="#204080"/><path d="M103 6q5-4 10-3" fill="none" stroke="#f0a020" stroke-width="2"/>
</svg>
<div class="ck" style="left:199px;top:806px;width:31px;height:22px;border:1px solid;border-color:#404040 #fff #fff #404040;background:#fff"></div>
<svg class="a" style="left:205px;top:808px" width="19" height="19"><use href="#girl" width="19" height="19"/></svg>
<div style="left:1218px;top:809px;line-height:16px">EN</div>
<div style="left:1238px;top:807px;width:3px;height:21px;border-left:1px solid #fff;border-right:1px solid #808080"></div>
<div style="left:1243px;top:806px;width:194px;height:22px;border:1px solid;border-color:#808080 #fff #fff #808080"></div>
<svg class="a" style="left:1243px;top:806px" width="194" height="22">
<path d="M6 9l2.500-3 2.500 3M6 13l2.500-3 2.500 3" fill="none" stroke="#000" stroke-width="1.500"/>
<path d="M23 5h10v13H23z" fill="#e8e8e8" stroke="#404040"/><path d="M30 4v4M35 4v4M28 8h10v3l-3 3h-4l-3-3zM33 14v4" fill="#fff" stroke="#404040"/>
<path d="M48 9h3l4-4v13l-4-4h-3z" fill="#d0d0d0" stroke="#808080"/><path d="M58 8q2 3 0 7M61 6q3 5 0 11" fill="none" stroke="#808080"/>
<path d="M70 4v16M70 5h9v7h-9" fill="#fff" stroke="#606060"/><circle cx="81" cy="16" r="5" fill="#e02020"/><path d="M79 14l4 4M83 14l-4 4" stroke="#fff" stroke-width="1.300"/>
<path d="M99 7h14v11H99z" fill="#909090" stroke="#404040"/><path d="M92 4h5v10h-5z" fill="#fff" stroke="#404040"/>
<rect x="178" y="5" width="15" height="13" fill="#3080d0" stroke="#6090c0"/><rect x="181" y="13" width="11" height="3" fill="#1a3070"/>
</svg>
<div style="left:1370px;top:809px;line-height:16px;white-space:pre;font-size:11px;letter-spacing:-.1px">1:08 PM</div>

</div></body></html>
